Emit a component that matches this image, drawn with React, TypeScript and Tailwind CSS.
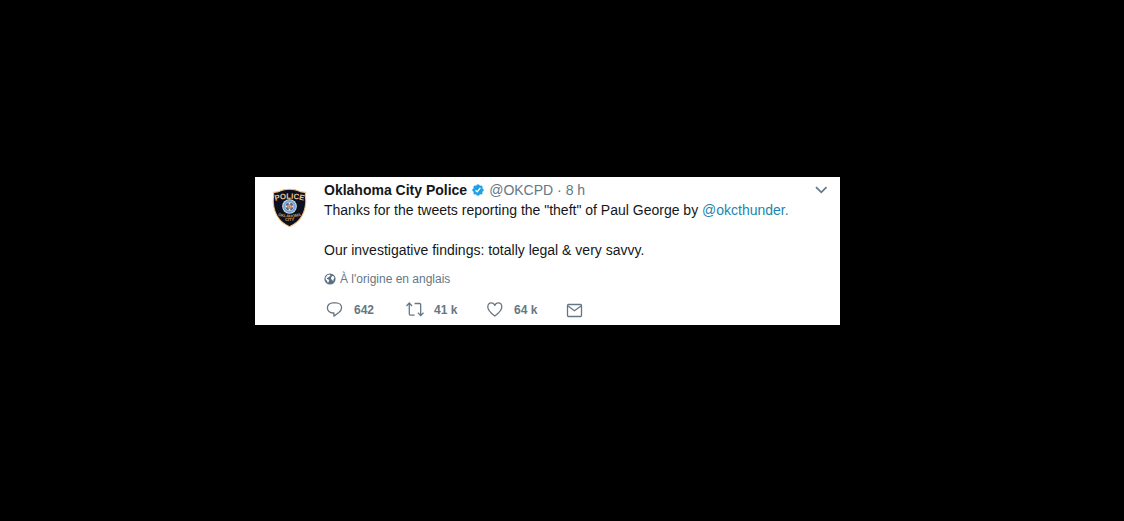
import React from 'react';

function Shield() {
  return (
    <svg viewBox="0 0 36 40" className="h-10 w-9" role="img" aria-label="Oklahoma City Police badge">
      <path
        d="M17.500 1.200C22 1.200 25.500 1.900 28.500 3.800C30.500 4.100 32.300 4.200 33.600 4.400C32.700 8 34.200 11 33.700 15C33.200 21 31.500 26 28.500 30C26 34 22 36.500 17.500 38.800C13 36.500 9 34 6.500 30C3.500 26 1.800 21 1.300 15C.8 11 2.300 8 1.400 4.400C2.700 4.200 4.500 4.100 6.500 3.800C9.500 1.900 13 1.200 17.500 1.200Z"
        fill="#0c1020"
        stroke="#f0c383"
        strokeWidth="1.100"
      />
      <path id="badge-arc" d="M1 13.400Q17.500 8.200 34 13.400" fill="none" />
      <text fontFamily="Liberation Sans, sans-serif" fontSize="7.800" fontWeight="700" fill="#ecc894" textAnchor="middle">
        <textPath href="#badge-arc" startOffset="50%">POLICE</textPath>
      </text>
      <circle cx="17.500" cy="18.500" r="7.300" fill="#d5e3ee" />
      <circle cx="17.500" cy="18.500" r="5.500" fill="none" stroke="#72a6d4" strokeWidth="1.800" />
      <circle cx="17.500" cy="18.500" r="4" fill="#5d6783" />
      <path d="M17.500 14.500v8M13.700 18.500h7.600" stroke="#f8e5d5" strokeWidth="1.500" />
      <path d="M17.500 16v5M15 18.500h5" stroke="#c96a50" strokeWidth=".7" />
      <path id="badge-lower-arc" d="M5.500 27.500Q17.500 31.500 29.500 27.500" fill="none" />
      <text fontFamily="Liberation Sans, sans-serif" fontSize="4" fontWeight="700" fill="#d7a55b" textAnchor="middle">
        <textPath href="#badge-lower-arc" startOffset="50%">OKLAHOMA</textPath>
      </text>
      <text x="17.500" y="33" fontFamily="Liberation Sans, sans-serif" fontSize="4" fontWeight="700" fill="#d7a55b" textAnchor="middle">CITY</text>
    </svg>
  );
}

function Verified() {
  return (
    <svg viewBox="0 0 12 12" className="size-3" role="img" aria-label="Verified account">
      <g fill="#1da1e8">
        <circle cx="6" cy="6" r="4.700" />
        <circle cx="6" cy="1.800" r="1.600" />
        <circle cx="9" cy="3" r="1.600" />
        <circle cx="10.200" cy="6" r="1.600" />
        <circle cx="9" cy="9" r="1.600" />
        <circle cx="6" cy="10.200" r="1.600" />
        <circle cx="3" cy="9" r="1.600" />
        <circle cx="1.800" cy="6" r="1.600" />
        <circle cx="3" cy="3" r="1.600" />
      </g>
      <path d="m3.500 6.200 1.700 1.700 3.200-4" fill="none" stroke="white" strokeWidth="1.300" />
    </svg>
  );
}

function Globe() {
  return (
    <svg viewBox="0 0 12 12" className="size-3" aria-hidden="true">
      <circle cx="6" cy="6" r="5.600" fill="#5b7083" />
      <path
        d="M3.300 2.200 5.300 1.500 6.600 2.500 5.500 3.400 4.400 4.300 3.300 4.800 2.700 5.700 4.600 6.400 5.200 7.600 4.500 9 3.900 10.100 3.100 8.100 1.700 6.600 1.600 4.600ZM8.100 3.100 9.700 3.300 10.400 5.100 9.600 6.100 9.200 8.200 8.200 7 7.300 6.300 7 4.700Z"
        fill="white"
      />
    </svg>
  );
}

function Reply() {
  return (
    <svg viewBox="0 0 18 18" className="size-[18px]" fill="none" stroke="#657786" strokeWidth="1.300" aria-hidden="true">
      <path d="M7 1.800h3c3.200 0 5.600 2.200 5.600 5 0 2.300-1.300 3.700-3.100 5l-4.600 3.300V12H7c-3.200 0-5.600-2.200-5.600-5.100S3.800 1.800 7 1.800Z" strokeLinejoin="round" />
    </svg>
  );
}

function Retweet() {
  return (
    <svg viewBox="0 0 18 18" className="size-[18px]" fill="none" stroke="#657786" strokeWidth="1.300" aria-hidden="true">
      <path d="m.5 5 2.800-3L6 5M3.300 2v10.800c0 .8.5 1.300 1.300 1.300h4M8.600 2.500h4.800c.8 0 1.300.5 1.300 1.300v10.700M12 11.700l2.700 2.900 2.800-2.900" />
    </svg>
  );
}

function Heart() {
  return (
    <svg viewBox="0 0 18 18" className="size-[18px]" fill="none" stroke="#657786" strokeWidth="1.300" aria-hidden="true">
      <path d="M8.800 15C6 12.900 1.800 9.700 1.800 5.900c0-2.400 1.500-4.100 3.500-4.100 1.600 0 2.900 1 3.500 2.600.6-1.600 1.900-2.600 3.500-2.600 2 0 3.500 1.700 3.500 4.100 0 3.800-4.200 7-7 9.100Z" strokeLinejoin="round" />
    </svg>
  );
}

function Mail() {
  return (
    <svg viewBox="0 0 18 18" className="size-[18px]" fill="none" stroke="#657786" strokeWidth="1.300" aria-hidden="true">
      <rect x="1.500" y="3.500" width="14" height="12" rx="1" />
      <path d="m2 5 6.500 4.800L15 5" />
    </svg>
  );
}

const action = 'flex h-5 w-20 cursor-pointer items-center gap-2.5 text-xs font-bold text-[#657786]';

export default function App() {
  return (
    <main className="min-h-screen bg-black pt-[177px] pr-[29px] font-['Liberation_Sans',Arial,sans-serif]">
      <article className="mx-auto flex w-full max-w-[585px] gap-4 bg-white pt-[3px] pr-3 pb-[5px] pl-[17px] text-sm leading-5 text-[#14171a]">
        <a href="#profile" aria-label="Oklahoma City Police" className="shrink-0 self-start pt-2">
          <Shield />
        </a>
        <div className="min-w-0 flex-1">
          <header className="flex h-5 items-center">
            <a href="#profile" className="font-bold">Oklahoma City Police</a>
            <span className="mx-[5px]"><Verified /></span>
            <a href="#profile" className="text-[#657786]">@OKCPD</a>
            <span className="whitespace-pre text-[#657786]"> · </span>
            <a href="#tweet" className="text-[#657786]">8 h</a>
            <button type="button" aria-label="More" className="ml-auto cursor-pointer">
              <svg viewBox="0 0 14 10" className="h-2.5 w-3.5" fill="none" stroke="#657786" strokeWidth="1.700" aria-hidden="true">
                <path d="m2 2.200 5.300 5.200 5.200-5.200" />
              </svg>
            </button>
          </header>
          <p>Thanks for the tweets reporting the "theft" of Paul George by <a href="#okcthunder" className="text-[#1b85b0]">@okcthunder.</a></p>
          <p className="mt-5">Our investigative findings: totally legal &amp; very savvy.</p>
          <button type="button" className="mt-[9px] flex h-5 cursor-pointer items-center gap-1 text-xs text-[#657786]">
            <Globe />
            <span>À l'origine en anglais</span>
          </button>
          <footer className="mt-[11px] flex pl-0.5">
            <button type="button" aria-label="Reply 642" className={action}><Reply /><span>642</span></button>
            <button type="button" aria-label="Retweet 41 k" className={action}><Retweet /><span>41 k</span></button>
            <button type="button" aria-label="Like 64 k" className={action}><Heart /><span>64 k</span></button>
            <button type="button" aria-label="Direct message" className={action}><Mail /></button>
          </footer>
        </div>
      </article>
    </main>
  );
}
